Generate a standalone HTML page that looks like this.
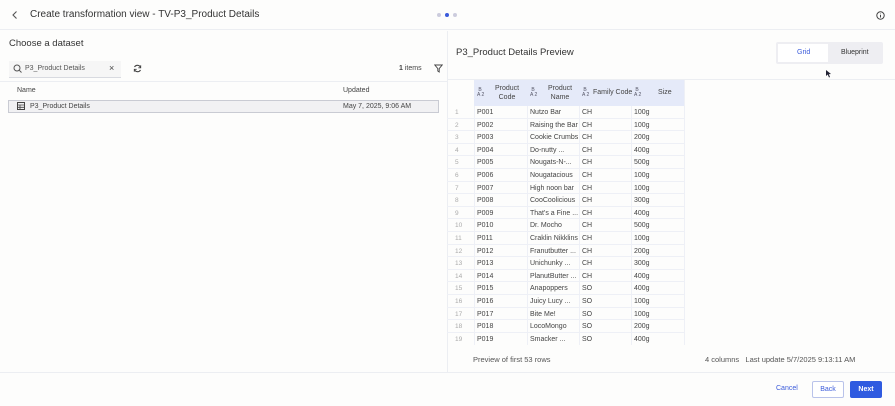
<!DOCTYPE html>
<html><head><meta charset="utf-8"><style>
*{box-sizing:border-box;margin:0;padding:0}
body{width:895px;height:406px;background:#fdfdfc;font-family:"Liberation Sans",sans-serif;color:#333;position:relative;overflow:hidden}
.a{position:absolute}
.t{font-size:7px;color:#444}
.row{position:absolute;left:447px;width:237px;height:12.6px;border-bottom:1px solid #eef0f6}
.row span{position:absolute;top:3px;font-size:7px;color:#444;white-space:nowrap}
.row .n{left:8px;color:#aaa;font-size:6.5px}
</style></head><body>
<div class="a" style="left:0;top:0;width:895px;height:30px;border-bottom:1px solid #eceef2;background:#fdfdfc"></div>
<svg class="a" style="left:11px;top:10px" width="8" height="10"><path d="M5.5 1.5 L2 5 L5.5 8.5" stroke="#555" stroke-width="1.1" fill="none"/></svg>
<div class="a" style="left:30px;top:9px;font-size:10px;color:#333">Create transformation view - TV-P3_Product Details</div>
<div class="a" style="left:437px;top:13px;width:4px;height:4px;border-radius:50%;background:#ccd"></div>
<div class="a" style="left:445px;top:13px;width:4px;height:4px;border-radius:50%;background:#3b5bdb"></div>
<div class="a" style="left:453px;top:13px;width:4px;height:4px;border-radius:50%;background:#ccd"></div>
<svg class="a" style="left:876px;top:11px" width="9" height="9"><circle cx="4.5" cy="4.5" r="3.7" stroke="#444" fill="none" stroke-width="1"/><path d="M4.5 4v2.5M4.5 2.6v.6" stroke="#444" stroke-width="1"/></svg>

<div class="a" style="left:447px;top:31px;width:1px;height:341px;background:#eceef2"></div>
<div class="a" style="left:0;top:372px;width:895px;height:1px;background:#eceef2"></div>

<div class="a" style="left:9px;top:38px;font-size:9.5px;color:#333">Choose a dataset</div>
<div class="a" style="left:9px;top:61px;width:112px;height:17px;border-bottom:1px solid #d8dae0;background:#f6f6f6"></div>
<svg class="a" style="left:13px;top:64px" width="10" height="10"><circle cx="4" cy="4" r="3" stroke="#555" fill="none" stroke-width="1"/><path d="M6.2 6.2L8.5 8.5" stroke="#555" stroke-width="1"/></svg>
<div class="a t" style="left:25px;top:65px;color:#555">P3_Product Details</div>
<div class="a" style="left:109px;top:63px;font-size:9px;color:#444">×</div>
<svg class="a" style="left:133px;top:64px" width="9" height="9"><path d="M7.5 3.5A3.3 3.3 0 0 0 1.5 3M1.5 5.5A3.3 3.3 0 0 0 7.5 6" stroke="#444" fill="none" stroke-width="1.1"/><path d="M7.7 1.3v2.5H5.3M1.3 7.7V5.3h2.4" stroke="#444" fill="none" stroke-width=".9"/></svg>
<div class="a t" style="left:399px;top:65px"><b>1</b> items</div>
<svg class="a" style="left:434px;top:64px" width="9" height="9"><path d="M.8 1h7.4L5.2 4.6V8L3.8 7V4.6z" stroke="#444" fill="none" stroke-width=".9"/></svg>
<div class="a" style="left:0;top:81px;width:447px;height:1px;background:#eceef2"></div>
<div class="a t" style="left:17px;top:87px">Name</div>
<div class="a t" style="left:343px;top:87px">Updated</div>
<div class="a" style="left:8px;top:100px;width:431px;height:13px;background:#f1f1f3;border:1px solid #c9cbd3"></div>
<svg class="a" style="left:17px;top:102px" width="8" height="8"><rect x=".5" y=".5" width="7" height="7" fill="none" stroke="#444"/><path d="M.5 3h7M.5 5.3h7M3 3v4.5" stroke="#444" stroke-width=".8"/></svg>
<div class="a t" style="left:30px;top:103px">P3_Product Details</div>
<div class="a t" style="left:343px;top:103px">May 7, 2025, 9:06 AM</div>

<div class="a" style="left:456px;top:47px;font-size:9.5px;color:#333">P3_Product Details Preview</div>
<div class="a" style="left:776px;top:42px;width:107px;height:22px;background:#eeeef2;border-radius:2px"></div>
<div class="a" style="left:778px;top:44px;width:50px;height:18px;background:#fff"></div>
<div class="a" style="left:797px;top:49px;font-size:7px;color:#3b5bdb">Grid</div>
<div class="a t" style="left:841px;top:49px;color:#333">Blueprint</div>
<svg class="a" style="left:826px;top:70px" width="6" height="8"><path d="M0 0L0 6L1.7 4.5L3 7.5L4 7L2.8 4.2L5 4z" fill="#223"/></svg>
<div class="a" style="left:447px;top:79px;width:448px;height:1px;background:#eceef2"></div>

<div class="a" style="left:474px;top:80px;width:210px;height:26px;background:#e5eaf9"></div>
<div class="a" style="left:477px;top:88px;font-size:5px;color:#556;line-height:5px">&nbsp;B<br>A 2</div>
<div class="a t" style="left:492px;top:85px;text-align:center;width:30px;line-height:8.5px">Product<br>Code</div>
<div class="a" style="left:530px;top:88px;font-size:5px;color:#556;line-height:5px">&nbsp;B<br>A 2</div>
<div class="a t" style="left:545px;top:85px;text-align:center;width:30px;line-height:8.5px">Product<br>Name</div>
<div class="a" style="left:582px;top:88px;font-size:5px;color:#556;line-height:5px">&nbsp;B<br>A 2</div>
<div class="a t" style="left:593px;top:89px">Family Code</div>
<div class="a" style="left:634px;top:88px;font-size:5px;color:#556;line-height:5px">&nbsp;B<br>A 2</div>
<div class="a t" style="left:658px;top:89px">Size</div>

<div class="a" style="left:474px;top:106px;width:1px;height:239px;background:#eef0f6"></div>
<div class="a" style="left:527px;top:106px;width:1px;height:239px;background:#eef0f6"></div>
<div class="a" style="left:579px;top:106px;width:1px;height:239px;background:#eef0f6"></div>
<div class="a" style="left:631px;top:106px;width:1px;height:239px;background:#eef0f6"></div>
<div class="a" style="left:684px;top:80px;width:1px;height:265px;background:#eef0f6"></div>

<div class="row" style="top:106px"><span class="n">1</span><span style="left:30px">P001</span><span style="left:83px">Nutzo Bar</span><span style="left:135px">CH</span><span style="left:187px">100g</span></div>
<div class="row" style="top:118.6px"><span class="n">2</span><span style="left:30px">P002</span><span style="left:83px">Raising the Bar</span><span style="left:135px">CH</span><span style="left:187px">100g</span></div>
<div class="row" style="top:131.2px"><span class="n">3</span><span style="left:30px">P003</span><span style="left:83px">Cookie Crumbs</span><span style="left:135px">CH</span><span style="left:187px">200g</span></div>
<div class="row" style="top:143.8px"><span class="n">4</span><span style="left:30px">P004</span><span style="left:83px">Do-nutty ...</span><span style="left:135px">CH</span><span style="left:187px">400g</span></div>
<div class="row" style="top:156.4px"><span class="n">5</span><span style="left:30px">P005</span><span style="left:83px">Nougats-N-...</span><span style="left:135px">CH</span><span style="left:187px">500g</span></div>
<div class="row" style="top:169px"><span class="n">6</span><span style="left:30px">P006</span><span style="left:83px">Nougatacious</span><span style="left:135px">CH</span><span style="left:187px">100g</span></div>
<div class="row" style="top:181.6px"><span class="n">7</span><span style="left:30px">P007</span><span style="left:83px">High noon bar</span><span style="left:135px">CH</span><span style="left:187px">100g</span></div>
<div class="row" style="top:194.2px"><span class="n">8</span><span style="left:30px">P008</span><span style="left:83px">CooCoolicious</span><span style="left:135px">CH</span><span style="left:187px">300g</span></div>
<div class="row" style="top:206.8px"><span class="n">9</span><span style="left:30px">P009</span><span style="left:83px">That's a Fine ...</span><span style="left:135px">CH</span><span style="left:187px">400g</span></div>
<div class="row" style="top:219.4px"><span class="n">10</span><span style="left:30px">P010</span><span style="left:83px">Dr. Mocho</span><span style="left:135px">CH</span><span style="left:187px">500g</span></div>
<div class="row" style="top:232px"><span class="n">11</span><span style="left:30px">P011</span><span style="left:83px">Craklin Nikklins</span><span style="left:135px">CH</span><span style="left:187px">100g</span></div>
<div class="row" style="top:244.6px"><span class="n">12</span><span style="left:30px">P012</span><span style="left:83px">Franutbutter ...</span><span style="left:135px">CH</span><span style="left:187px">200g</span></div>
<div class="row" style="top:257.2px"><span class="n">13</span><span style="left:30px">P013</span><span style="left:83px">Unichunky ...</span><span style="left:135px">CH</span><span style="left:187px">300g</span></div>
<div class="row" style="top:269.8px"><span class="n">14</span><span style="left:30px">P014</span><span style="left:83px">PlanutButter ...</span><span style="left:135px">CH</span><span style="left:187px">400g</span></div>
<div class="row" style="top:282.4px"><span class="n">15</span><span style="left:30px">P015</span><span style="left:83px">Anapoppers</span><span style="left:135px">SO</span><span style="left:187px">400g</span></div>
<div class="row" style="top:295px"><span class="n">16</span><span style="left:30px">P016</span><span style="left:83px">Juicy Lucy ...</span><span style="left:135px">SO</span><span style="left:187px">100g</span></div>
<div class="row" style="top:307.6px"><span class="n">17</span><span style="left:30px">P017</span><span style="left:83px">Bite Me!</span><span style="left:135px">SO</span><span style="left:187px">100g</span></div>
<div class="row" style="top:320.2px"><span class="n">18</span><span style="left:30px">P018</span><span style="left:83px">LocoMongo</span><span style="left:135px">SO</span><span style="left:187px">200g</span></div>
<div class="row" style="top:332.8px;height:12px;border:none;overflow:hidden"><span class="n">19</span><span style="left:30px">P019</span><span style="left:83px">Smacker ...</span><span style="left:135px">SO</span><span style="left:187px">400g</span></div>

<div class="a" style="left:473px;top:355px;font-size:7.5px;color:#555">Preview of first 53 rows</div>
<div class="a" style="left:705px;top:355px;font-size:7.5px;color:#555">4 columns&nbsp;&nbsp;&nbsp;Last update 5/7/2025 9:13:11 AM</div>

<div class="a" style="left:776px;top:385px;font-size:7px;color:#3b5bdb">Cancel</div>
<div class="a" style="left:812px;top:381px;width:32px;height:17px;border:1px solid #b9c3ea;border-radius:2px;background:#fff;font-size:7px;color:#3b5bdb;text-align:center;line-height:15px">Back</div>
<div class="a" style="left:850px;top:381px;width:32px;height:17px;border-radius:2px;background:#2f5be0;font-size:7px;color:#fff;text-align:center;line-height:17px;font-weight:bold">Next</div>
</body></html>
